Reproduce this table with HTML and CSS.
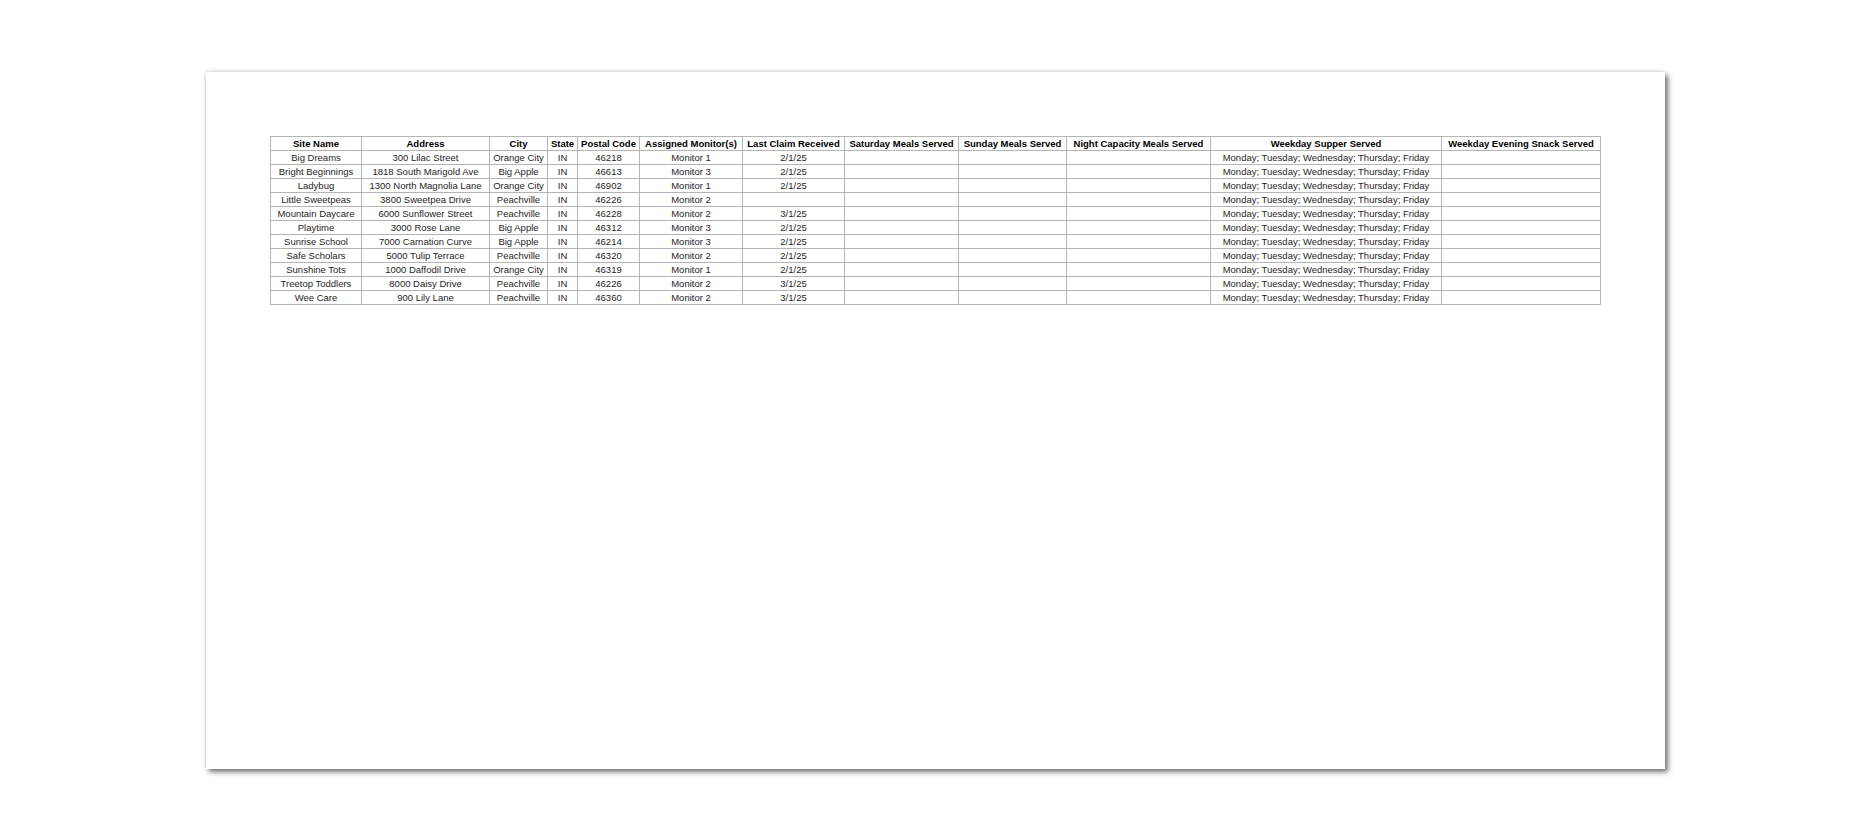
FILE: index.html
```html
<!DOCTYPE html>
<html>
<head>
<meta charset="utf-8">
<link rel="stylesheet" href="styles.css">
</head>
<body>
<div class="page">
  <table class="sheet">
    <colgroup>
      <col class="c1"><col class="c2"><col class="c3"><col class="c4"><col class="c5"><col class="c6">
      <col class="c7"><col class="c8"><col class="c9"><col class="c10"><col class="c11"><col class="c12">
    </colgroup>
    <thead>
      <tr>
        <th>Site Name</th><th>Address</th><th>City</th><th>State</th><th>Postal Code</th><th>Assigned Monitor(s)</th>
        <th>Last Claim Received</th><th>Saturday Meals Served</th><th>Sunday Meals Served</th><th>Night Capacity Meals Served</th>
        <th>Weekday Supper Served</th><th>Weekday Evening Snack Served</th>
      </tr>
    </thead>
    <tbody>
      <tr><td>Big Dreams</td><td>300 Lilac Street</td><td>Orange City</td><td>IN</td><td>46218</td><td>Monitor 1</td><td>2/1/25</td><td></td><td></td><td></td><td>Monday; Tuesday; Wednesday; Thursday; Friday</td><td></td></tr>
      <tr><td>Bright Beginnings</td><td>1818 South Marigold Ave</td><td>Big Apple</td><td>IN</td><td>46613</td><td>Monitor 3</td><td>2/1/25</td><td></td><td></td><td></td><td>Monday; Tuesday; Wednesday; Thursday; Friday</td><td></td></tr>
      <tr><td>Ladybug</td><td>1300 North Magnolia Lane</td><td>Orange City</td><td>IN</td><td>46902</td><td>Monitor 1</td><td>2/1/25</td><td></td><td></td><td></td><td>Monday; Tuesday; Wednesday; Thursday; Friday</td><td></td></tr>
      <tr><td>Little Sweetpeas</td><td>3800 Sweetpea Drive</td><td>Peachville</td><td>IN</td><td>46226</td><td>Monitor 2</td><td></td><td></td><td></td><td></td><td>Monday; Tuesday; Wednesday; Thursday; Friday</td><td></td></tr>
      <tr><td>Mountain Daycare</td><td>6000 Sunflower Street</td><td>Peachville</td><td>IN</td><td>46228</td><td>Monitor 2</td><td>3/1/25</td><td></td><td></td><td></td><td>Monday; Tuesday; Wednesday; Thursday; Friday</td><td></td></tr>
      <tr><td>Playtime</td><td>3000 Rose Lane</td><td>Big Apple</td><td>IN</td><td>46312</td><td>Monitor 3</td><td>2/1/25</td><td></td><td></td><td></td><td>Monday; Tuesday; Wednesday; Thursday; Friday</td><td></td></tr>
      <tr><td>Sunrise School</td><td>7000 Carnation Curve</td><td>Big Apple</td><td>IN</td><td>46214</td><td>Monitor 3</td><td>2/1/25</td><td></td><td></td><td></td><td>Monday; Tuesday; Wednesday; Thursday; Friday</td><td></td></tr>
      <tr><td>Safe Scholars</td><td>5000 Tulip Terrace</td><td>Peachville</td><td>IN</td><td>46320</td><td>Monitor 2</td><td>2/1/25</td><td></td><td></td><td></td><td>Monday; Tuesday; Wednesday; Thursday; Friday</td><td></td></tr>
      <tr><td>Sunshine Tots</td><td>1000 Daffodil Drive</td><td>Orange City</td><td>IN</td><td>46319</td><td>Monitor 1</td><td>2/1/25</td><td></td><td></td><td></td><td>Monday; Tuesday; Wednesday; Thursday; Friday</td><td></td></tr>
      <tr><td>Treetop Toddlers</td><td>8000 Daisy Drive</td><td>Peachville</td><td>IN</td><td>46226</td><td>Monitor 2</td><td>3/1/25</td><td></td><td></td><td></td><td>Monday; Tuesday; Wednesday; Thursday; Friday</td><td></td></tr>
      <tr><td>Wee Care</td><td>900 Lily Lane</td><td>Peachville</td><td>IN</td><td>46360</td><td>Monitor 2</td><td>3/1/25</td><td></td><td></td><td></td><td>Monday; Tuesday; Wednesday; Thursday; Friday</td><td></td></tr>
    </tbody>
  </table>
</div>
</body>
</html>
```

FILE: styles.css
```css
html, body {
  margin: 0;
  padding: 0;
  background: #ffffff;
}

body {
  padding: 72px 0 0 206px;
  height: 834px;
  box-sizing: border-box;
  overflow: hidden;
  font-family: "Liberation Sans", Arial, Helvetica, sans-serif;
}

.page {
  width: 1459px;
  height: 697px;
  box-sizing: border-box;
  padding: 64px 0 0 64px;
  background: #ffffff;
  box-shadow: 3px 3px 5px rgba(0, 0, 0, 0.55), -1px -1px 3px rgba(0, 0, 0, 0.12);
}

.sheet {
  border-collapse: collapse;
  table-layout: fixed;
  width: 1330px;
  font-size: 9.5px;
  color: #1e1e1e;
}

.sheet th,
.sheet td {
  border: 1px solid #b4b4b4;
  height: 13px;
  padding: 0;
  line-height: 12px;
  text-align: center;
  white-space: nowrap;
  overflow: hidden;
  vertical-align: middle;
}

.sheet th {
  font-weight: bold;
  color: #000000;
}

.c1 { width: 91px; }
.c2 { width: 128px; }
.c3 { width: 58px; }
.c4 { width: 30px; }
.c5 { width: 62px; }
.c6 { width: 103px; }
.c7 { width: 102px; }
.c8 { width: 114px; }
.c9 { width: 108px; }
.c10 { width: 144px; }
.c11 { width: 231px; }
.c12 { width: 159px; }
```
